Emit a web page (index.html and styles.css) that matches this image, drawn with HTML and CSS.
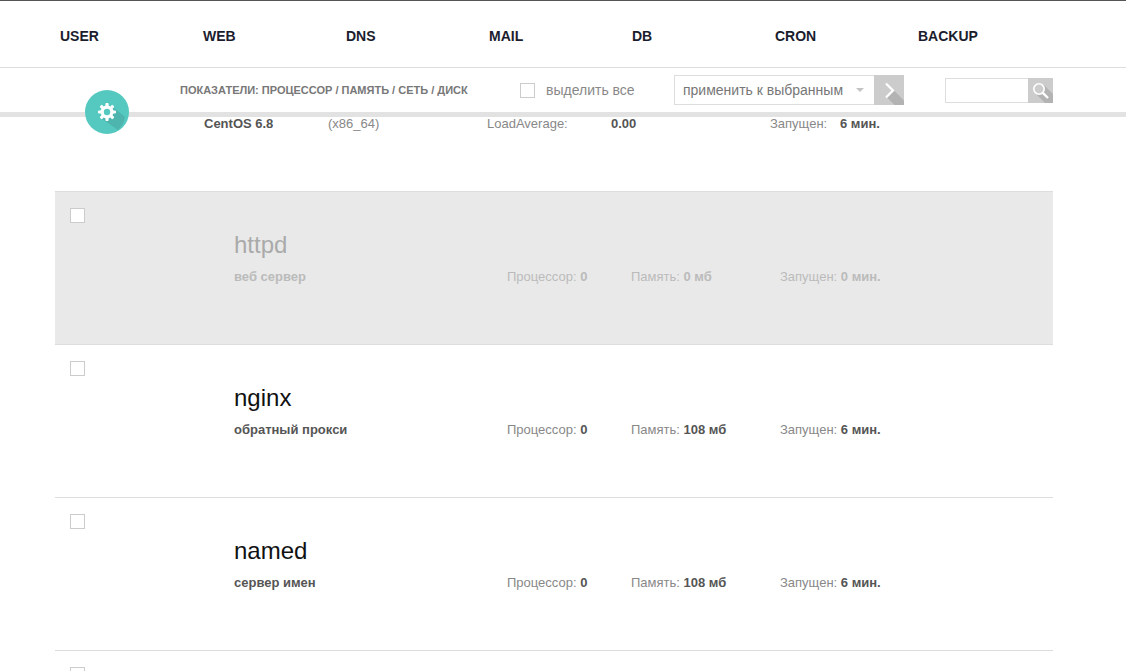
FILE: index.html
```html
<!DOCTYPE html>
<html lang="ru">
    <head>
        <title>Server</title>
        <meta charset="utf-8" />
        <link rel="stylesheet" href="styles.css">
    </head>

    <body>
        <header class="header">
            <nav class="menu">
                <a href="#">USER</a>
                <a href="#">WEB</a>
                <a href="#">DNS</a>
                <a href="#">MAIL</a>
                <a href="#">DB</a>
                <a href="#">CRON</a>
                <a href="#">BACKUP</a>
            </nav>
            <div class="toolbar">
                <button class="gear" type="button" aria-label="Настройки">
                    <svg width="44" height="44" viewBox="0 0 44 44">
                        <path d="M28 17 L40 27 A22 22 0 0 1 33 40 L16 28 Z" fill="#4eb5ae" />
                        <g fill="#fff">
                            <rect x="20.4" y="13" width="3.2" height="18" rx="1" />
                            <rect x="20.4" y="13" width="3.2" height="18" rx="1" transform="rotate(45 22 22)" />
                            <rect x="20.4" y="13" width="3.2" height="18" rx="1" transform="rotate(90 22 22)" />
                            <rect x="20.4" y="13" width="3.2" height="18" rx="1" transform="rotate(135 22 22)" />
                            <circle cx="22" cy="22" r="6.5" />
                        </g>
                        <circle cx="22" cy="22" r="3.2" fill="#55c9c0" />
                    </svg>
                </button>
                <a class="metrics" href="#">ПОКАЗАТЕЛИ: ПРОЦЕССОР / ПАМЯТЬ / СЕТЬ / ДИСК</a>
                <label class="select-all"><input class="check" type="checkbox" /> выделить все</label>
                <form class="apply">
                    <div class="select-wrap">
                        <select class="select" aria-label="Действие">
                            <option>применить к выбранным</option>
                        </select>
                        <svg class="caret" width="8" height="4" viewBox="0 0 8 4"><path d="M0 0h8L4 4z" fill="#c4c4c4" /></svg>
                    </div>
                    <button class="icon-btn" type="button" aria-label="Применить">
                        <svg width="30" height="30" viewBox="0 0 30 30">
                            <path d="M20 15.5 L30 25.5 V30 H20.5 L13 22.5 Z" fill="#b3b3b3" />
                            <path d="M12 8.5 L19 15.5 L12 22.5" fill="none" stroke="#fff" stroke-width="2.2" />
                        </svg>
                    </button>
                </form>
                <form class="search">
                    <input class="search-field" type="text" aria-label="Поиск" />
                    <button class="icon-btn" type="button" aria-label="Найти">
                        <svg width="25" height="25" viewBox="0 0 25 25">
                            <path d="M16 7 L25 16 V25 H17 L7 15 Z" fill="#b3b3b3" />
                            <circle cx="11" cy="11" r="5.2" fill="#ccc" stroke="#fff" stroke-width="1.6" />
                            <path d="M14.8 14.8 L20 20" stroke="#fff" stroke-width="2.4" />
                        </svg>
                    </button>
                </form>
            </div>
        </header>

        <main class="content">
            <div class="summary">
                <b>CentOS 6.8</b>
                <span>(x86_64)</span>
                <span>LoadAverage:</span>
                <b>0.00</b>
                <span>Запущен:</span>
                <b>6 мин.</b>
            </div>

            <section class="unit stopped">
                <input class="check" type="checkbox" aria-label="httpd" />
                <h2 class="name">httpd</h2>
                <b class="about">веб сервер</b>
                <span>Процессор: <b>0</b></span>
                <span>Память: <b>0 мб</b></span>
                <span>Запущен: <b>0 мин.</b></span>
            </section>

            <section class="unit">
                <input class="check" type="checkbox" aria-label="nginx" />
                <h2 class="name">nginx</h2>
                <b class="about">обратный прокси</b>
                <span>Процессор: <b>0</b></span>
                <span>Память: <b>108 мб</b></span>
                <span>Запущен: <b>6 мин.</b></span>
            </section>

            <section class="unit">
                <input class="check" type="checkbox" aria-label="named" />
                <h2 class="name">named</h2>
                <b class="about">сервер имен</b>
                <span>Процессор: <b>0</b></span>
                <span>Память: <b>108 мб</b></span>
                <span>Запущен: <b>6 мин.</b></span>
            </section>

            <section class="unit">
                <input class="check" type="checkbox" />
            </section>
        </main>
    </body>
</html>
```

FILE: styles.css
```css
* {
    box-sizing: border-box;
}

body {
    display: flex;
    flex-direction: column;
    height: 100vh;
    margin: 0;
    background-color: #fff;
    color: #888;
    font-family: "Liberation Sans", Arial, sans-serif;
    font-size: 13px;
    line-height: 14px;
}

a {
    color: inherit;
    text-decoration: none;
}

b {
    color: #555;
}

button {
    border: 0;
    padding: 0;
    cursor: pointer;
}

svg {
    display: block;
}

.header {
    position: relative;
    z-index: 1;
    border-top: 1px solid #555;
    border-bottom: 5px solid #e2e2e2;
}

.menu {
    display: grid;
    grid-template-columns: repeat(7, 143px);
    align-items: center;
    height: 67px;
    padding: 3px 0 0 60px;
    border-bottom: 1px solid #ddd;
    color: #1b1d2e;
    font-size: 14px;
    font-weight: bold;
}

.toolbar {
    position: relative;
    display: flex;
    align-items: center;
    height: 44px;
    padding: 0 73px 0 180px;
}

/* round button hangs over the bottom bar */
.gear {
    position: absolute;
    left: 85px;
    top: 22px;
    width: 44px;
    height: 44px;
    border-radius: 50%;
    overflow: hidden;
    background-color: #55c9c0;
}

.metrics {
    width: 340px;
    color: #777;
    font-size: 11px;
    font-weight: bold;
}

.check {
    appearance: none;
    width: 15px;
    height: 15px;
    margin: 0;
    border: 1px solid #ccc;
    background-color: #fff;
}

.check:checked {
    background-color: #55c9c0;
}

.select-all {
    display: flex;
    align-items: center;
    gap: 11px;
    width: 154px;
    font-size: 14px;
}

.apply,
.search {
    display: flex;
}

.select-wrap {
    position: relative;
}

.select {
    appearance: none;
    width: 200px;
    height: 30px;
    padding: 0 8px;
    border: 1px solid #ddd;
    border-right: 0;
    border-radius: 0;
    background-color: #fff;
    color: #777;
    font-family: inherit;
    font-size: 14px;
}

.caret {
    position: absolute;
    right: 10px;
    top: 13px;
    pointer-events: none;
}

.icon-btn {
    background-color: #ccc;
}

.search {
    margin-left: auto;
}

.search-field {
    width: 83px;
    height: 25px;
    border: 1px solid #ddd;
    border-right: 0;
}

/* the unit list scrolls under the header */
.content {
    flex: 1;
    min-height: 0;
    overflow: hidden auto;
    scrollbar-width: none;
    padding: 0 73px 0 55px;
}

.summary {
    display: grid;
    grid-template-columns: 124px 159px 124px 159px 70px 1fr;
    height: 74px;
    padding: 0 0 0 149px;
}

.unit {
    display: grid;
    grid-template-columns: 164px 273px 124px 149px 1fr;
    grid-template-rows: 62px 14px;
    height: 153px;
    padding: 16px 15px;
    border-top: 1px solid #ddd;
}

.name {
    grid-column: 2 / -1;
    align-self: center;
    margin: 0;
    padding-top: 12px;
    color: #111;
    font-size: 24px;
    font-weight: normal;
    line-height: 28px;
}

.about {
    grid-column: 2;
}

.stopped {
    background-color: #e9e9e9;
    color: #bbb;
}

.stopped b {
    color: #bbb;
}

.stopped .name {
    color: #aaa;
}
```
